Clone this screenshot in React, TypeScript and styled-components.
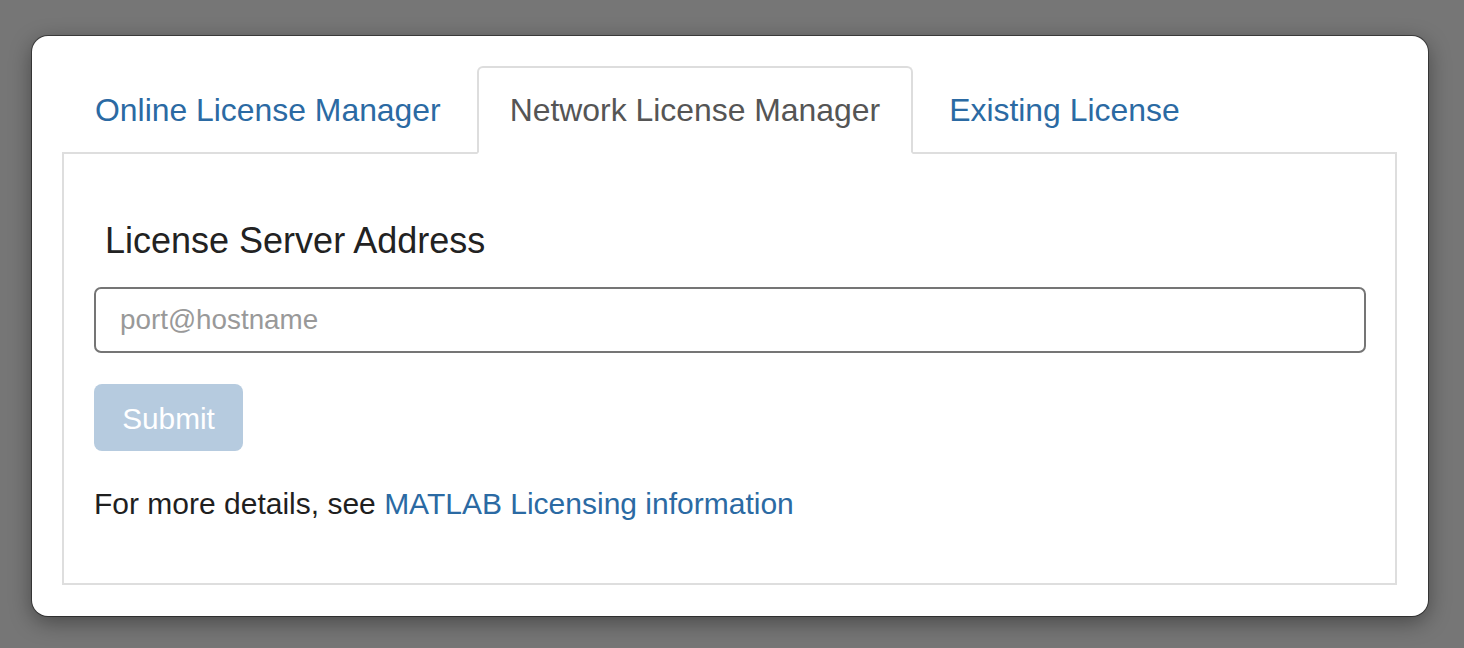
import React from "react";
import styled, { createGlobalStyle } from "styled-components";

const GlobalStyle = createGlobalStyle`
  html, body {
    margin: 0;
    padding: 0;
    background: #767676;
    font-family: "Liberation Sans", Arial, Helvetica, sans-serif;
  }
  * { box-sizing: border-box; }
`;

const Page = styled.div`
  width: 1464px;
  height: 648px;
  padding: 36px 36px 0 32px;
  background: #767676;
`;

const Card = styled.div`
  background: #ffffff;
  border-radius: 16px;
  height: 580px;
  padding: 30px 31px 31px 30px;
  box-shadow: 0 0 0 1px rgba(0, 0, 0, 0.45), 0 6px 22px rgba(0, 0, 0, 0.4);
  display: flex;
  flex-direction: column;
`;

const TabList = styled.ul`
  list-style: none;
  margin: 0 0 -2px 0;
  padding: 0;
  display: flex;
  position: relative;
  z-index: 1;
`;

const Tab = styled.li<{ $active?: boolean }>`
  margin-right: 3px;
  height: 88px;
  padding: 0 31px;
  display: flex;
  align-items: center;
  font-size: 31.9px;
  color: ${(p) => (p.$active ? "#555555" : "#2b6aa3")};
  background: ${(p) => (p.$active ? "#ffffff" : "transparent")};
  border: 2px solid ${(p) => (p.$active ? "#dddddd" : "transparent")};
  border-bottom-color: ${(p) => (p.$active ? "#ffffff" : "transparent")};
  border-radius: 6px 6px 0 0;
  cursor: pointer;
  white-space: nowrap;
`;

const Panel = styled.div`
  flex: 1;
  border: 2px solid #dedede;
  padding: 0 29px 0 30px;
  display: flex;
  flex-direction: column;
  align-items: flex-start;
`;

const Heading = styled.h3`
  margin: 67px 0 26px 0;
  padding-left: 11px;
  font-size: 36px;
  font-weight: 400;
  line-height: 39.6px;
  color: #222222;
`;

const Input = styled.input`
  width: 100%;
  height: 66px;
  border: 2px solid #757575;
  border-radius: 7px;
  padding: 0 24px;
  font-family: "Liberation Sans", Arial, sans-serif;
  font-size: 27.8px;
  color: #333;
  outline: none;
  &::placeholder {
    color: #999999;
  }
`;

const SubmitButton = styled.button`
  margin-top: 31px;
  width: 149px;
  height: 67px;
  padding: 4px 0 0 0;
  border: none;
  border-radius: 8px;
  background: #b6cbdf;
  color: #ffffff;
  font-family: "Liberation Sans", Arial, sans-serif;
  font-size: 29.8px;
  cursor: not-allowed;
`;

const Details = styled.p`
  margin: 32px 0 0 0;
  font-size: 30px;
  line-height: 42px;
  color: #1f1f1f;
`;

const Link = styled.a`
  color: #2b6aa3;
  text-decoration: none;
`;

export default function App() {
  return (
    <>
      <GlobalStyle />
      <Page>
        <Card>
          <TabList>
            <Tab>Online License Manager</Tab>
            <Tab $active>Network License Manager</Tab>
            <Tab>Existing License</Tab>
          </TabList>
          <Panel>
            <Heading>License Server Address</Heading>
            <Input placeholder="port@hostname" />
            <SubmitButton disabled>Submit</SubmitButton>
            <Details>
              For more details, see <Link href="#">MATLAB Licensing information</Link>
            </Details>
          </Panel>
        </Card>
      </Page>
    </>
  );
}
